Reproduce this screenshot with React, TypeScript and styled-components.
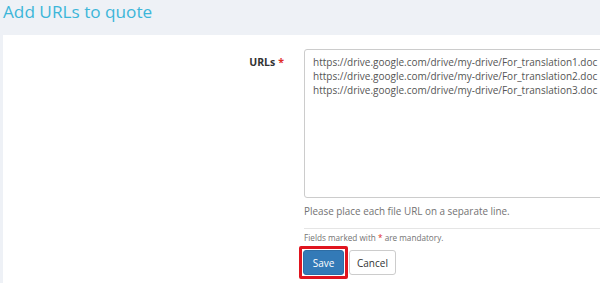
import React, { FC } from "react";
import styled, { createGlobalStyle } from "styled-components";

const GlobalStyle = createGlobalStyle`
  html, body {
    margin: 0;
    padding: 0;
    background: #eef1f6;
    overflow: hidden;
  }
  body {
    font-family: "Open Sans", "Liberation Sans", sans-serif;
    color: #555;
  }
`;

const Page = styled.div`
  width: 600px;
  height: 283px;
  padding-left: 3px;
  box-sizing: border-box;
  overflow: hidden;
`;

const Title = styled.h1`
  margin: 0;
  height: 35px;
  box-sizing: border-box;
  font-size: 17.2px;
  font-weight: 400;
  line-height: 23px;
  color: #3cb6d9;
`;

const Panel = styled.div`
  background: #fff;
  width: 597px;
  height: 248px;
  padding-top: 14px;
  box-sizing: border-box;
  overflow: hidden;
`;

const FormRow = styled.div`
  display: grid;
  grid-template-columns: 281px 360px;
  column-gap: 20px;
`;

const Label = styled.label`
  text-align: right;
  font-size: 10.5px;
  font-weight: 700;
  color: #333;
  padding-top: 6px;
`;

const Required = styled.span<{ $gap?: boolean }>`
  color: #e02b27;
  margin-left: ${(p) => (p.$gap ? "3px" : "0")};
`;

const TextArea = styled.textarea`
  display: block;
  width: 360px;
  height: 149px;
  box-sizing: border-box;
  border: 1px solid #ccc;
  border-radius: 3px;
  padding: 5px 8px;
  font-family: "Open Sans", "Liberation Sans", sans-serif;
  font-size: 10px;
  line-height: 14px;
  color: #555;
  resize: none;
  outline: none;
`;

const Help = styled.p`
  margin: 5px 0 0;
  font-size: 9.9px;
  line-height: 16px;
  color: #737373;
`;

const Footer = styled.div`
  margin-left: 301px;
  margin-top: 9px;
  border-top: 1px solid #e5e5e5;
  padding-top: 2px;
`;

const Note = styled.p`
  margin: 0;
  font-size: 8.2px;
  line-height: 14px;
  color: #737373;
`;

const Actions = styled.div`
  display: flex;
  align-items: center;
  gap: 1px;
  margin-top: 1px;
  margin-left: -5px;
`;

const Highlight = styled.span`
  display: inline-flex;
  border: 3px solid #e0141e;
  padding: 1px;
  border-radius: 2px;
`;

const Button = styled.button<{ $primary?: boolean }>`
  height: 25px;
  padding: 0 7px;
  border-radius: 3px;
  font-family: "Open Sans", "Liberation Sans", sans-serif;
  font-size: 10px;
  cursor: pointer;
  border: 1px solid ${(p) => (p.$primary ? "#2e6da4" : "#ccc")};
  background: ${(p) => (p.$primary ? "#337ab7" : "#fff")};
  color: ${(p) => (p.$primary ? "#fff" : "#333")};
  min-width: ${(p) => (p.$primary ? "41px" : "46px")};
`;

const urls = [
  "https://drive.google.com/drive/my-drive/For_translation1.doc",
  "https://drive.google.com/drive/my-drive/For_translation2.doc",
  "https://drive.google.com/drive/my-drive/For_translation3.doc",
].join("\n");

const App: FC = () => {
  return (
    <Page>
      <GlobalStyle />
      <Title>Add URLs to quote</Title>
      <Panel>
        <FormRow>
          <Label htmlFor="urls">
            URLs<Required $gap>*</Required>
          </Label>
          <div>
            <TextArea id="urls" defaultValue={urls} spellCheck={false} />
            <Help>Please place each file URL on a separate line.</Help>
          </div>
        </FormRow>
        <Footer>
          <Note>
            Fields marked with <Required>*</Required> are mandatory.
          </Note>
          <Actions>
            <Highlight>
              <Button $primary>Save</Button>
            </Highlight>
            <Button>Cancel</Button>
          </Actions>
        </Footer>
      </Panel>
    </Page>
  );
};

export default App;
